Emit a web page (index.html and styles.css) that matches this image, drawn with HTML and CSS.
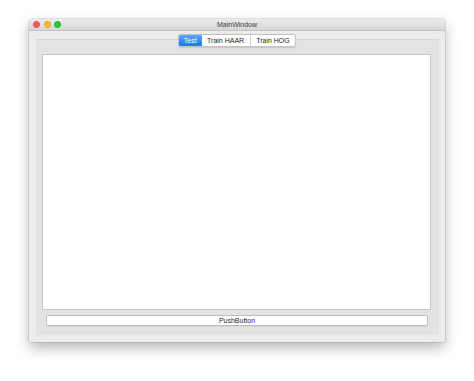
FILE: index.html
```html
<!DOCTYPE html>
<html>
<head>
<meta charset="utf-8">
<link rel="stylesheet" href="styles.css">
</head>
<body>
<div class="window">
  <div class="titlebar">
    <div class="lights">
      <span class="light red"></span>
      <span class="light yellow"></span>
      <span class="light green"></span>
    </div>
    <div class="title">MainWindow</div>
  </div>
  <div class="content">
    <div class="pane">
      <div class="tabbar">
        <div class="tab active">Test</div>
        <div class="tab">Train HAAR</div>
        <div class="tab last">Train HOG</div>
      </div>
      <div class="page"></div>
      <div class="button">PushButton</div>
    </div>
  </div>
</div>
</body>
</html>
```

FILE: styles.css
```css
html, body {
  margin: 0;
  padding: 0;
  background: #ffffff;
}
body {
  width: 474px;
  height: 381px;
  overflow: hidden;
  font-family: "Liberation Sans", Arial, sans-serif;
}
.window {
  margin: 19px 0 0 29px;
  width: 416px;
  height: 323px;
  display: flex;
  flex-direction: column;
  background: #ececec;
  border-radius: 3px 3px 1px 1px;
  box-shadow: 0 6px 14px rgba(0,0,0,0.28), 0 0 0 0.5px rgba(0,0,0,0.18);
  overflow: hidden;
}
.titlebar {
  height: 11px;
  flex: none;
  display: flex;
  align-items: center;
  justify-content: center;
  position: relative;
  background: linear-gradient(#ebebeb, #d6d6d6);
  border-bottom: 1px solid #c4c4c4;
}
.lights {
  position: absolute;
  left: 4px;
  top: 2px;
  display: flex;
  gap: 3.5px;
}
.light {
  width: 7px;
  height: 7px;
  border-radius: 50%;
  display: block;
}
.red { background: #fc5f57; border: 0.5px solid #e04640; box-sizing: border-box; }
.yellow { background: #fdbc2e; border: 0.5px solid #dea123; box-sizing: border-box; }
.green { background: #28c840; border: 0.5px solid #1aab2a; box-sizing: border-box; }
.title {
  font-size: 7px;
  color: #3d3d3d;
  line-height: 11px;
}
.content {
  flex: 1;
  display: flex;
  padding: 8px 6px 7px 7px;
}
.pane {
  flex: 1;
  display: flex;
  flex-direction: column;
  align-items: stretch;
  background: #e3e3e3;
  border-top: 1px solid #d8d8d8;
  box-sizing: border-box;
}
.tabbar {
  align-self: center;
  display: flex;
  margin-top: -6.5px;
  margin-left: -1px;
  height: 11px;
  background: #ffffff;
  border: 0.5px solid #c2c2c2;
  border-radius: 2.5px;
  box-shadow: 0 0.5px 1px rgba(0,0,0,0.12);
  overflow: hidden;
}
.tab {
  font-size: 7px;
  line-height: 11px;
  color: #1f1f1f;
  padding: 0 5.5px;
  border-right: 0.5px solid #d0d0d0;
}
.tab.last { border-right: none; padding-right: 5.5px; }
.tab.active {
  background: linear-gradient(#5aa7ff, #1e76f0);
  color: #ffffff;
  padding: 0 5px;
  border-right: none;
}
.page {
  margin: 7.5px 8px 0 6px;
  height: 256px;
  background: #ffffff;
  border: 0.5px solid #c6c6c6;
  box-sizing: border-box;
}
.button {
  margin: 5px 11px 0 10px;
  height: 11px;
  background: #ffffff;
  border: 0.5px solid #bdbdbd;
  border-radius: 1.5px;
  box-sizing: border-box;
  font-size: 7px;
  line-height: 10px;
  text-align: center;
  color: #1f1f1f;
  box-shadow: 0 0.5px 0.5px rgba(0,0,0,0.1);
}
```
